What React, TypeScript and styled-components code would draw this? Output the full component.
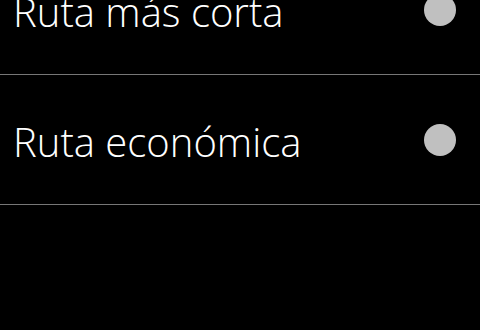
import styled, { createGlobalStyle } from "styled-components";

const GlobalStyle = createGlobalStyle`
  html, body {
    margin: 0;
    padding: 0;
    background: #000;
  }
`;

const routes = [
  { id: "short", label: "Ruta más corta" },
  { id: "cheap", label: "Ruta económica" },
];

const App = () => {
  return (
    <>
      <GlobalStyle />
      <Screen>
        <List>
          {routes.map((r) => (
            <Row key={r.id}>
              <Label>{r.label}</Label>
              <Dot />
            </Row>
          ))}
        </List>
      </Screen>
    </>
  );
};

const Screen = styled.div`
  width: 480px;
  height: 330px;
  background: #000;
  overflow: hidden;
`;

const List = styled.ul`
  list-style: none;
  margin: -55px 0 0 0;
  padding: 0;
`;

const Row = styled.li`
  height: 129px;
  display: flex;
  align-items: center;
  justify-content: space-between;
  padding: 0 24px 0 13px;
  border-bottom: 1px solid #777;
`;

const Label = styled.span`
  font-family: "Open Sans", "Noto Sans", sans-serif;
  font-weight: 300;
  font-size: 40px;
  color: #fff;
  line-height: 1;
  margin-top: 4px;
`;

const Dot = styled.span`
  width: 32px;
  height: 32px;
  border-radius: 50%;
  background: #c0c0c0;
`;

export default App;
